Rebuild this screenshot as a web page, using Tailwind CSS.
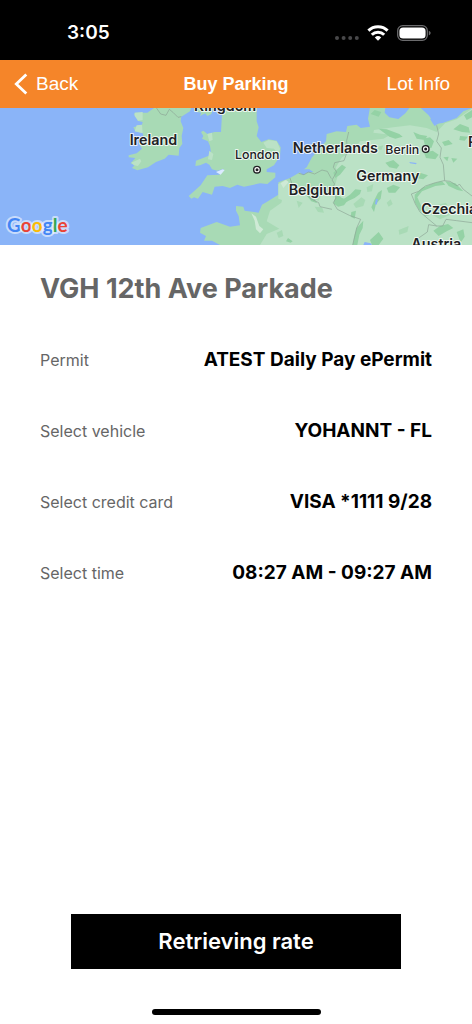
<!DOCTYPE html>
<html lang="en">
<head>
    <meta charset="UTF-8">
    <meta name="viewport" content="width=device-width, initial-scale=1.0">
    <title>Buy Parking</title>
    <script src="https://cdn.jsdelivr.net/npm/@tailwindcss/browser@4"></script>
</head>
<body class="min-h-screen flex flex-col bg-white text-black font-['Inter',sans-serif]">
    <!-- Status bar -->
    <div class="h-[60px] shrink-0 bg-black text-white flex justify-between items-center pl-[67px] pr-[41px] pt-[6px]">
        <span class="text-[19px] leading-6 font-semibold">3:05</span>
        <div class="flex items-center gap-2">
            <svg class="w-6 h-4" viewBox="0 0 24 16" fill="#48484a">
                <circle cx="2" cy="13" r="2"/>
                <circle cx="8.6" cy="13" r="2"/>
                <circle cx="15.2" cy="13" r="2"/>
                <circle cx="21.8" cy="13" r="2"/>
            </svg>
            <svg class="w-[22px] h-4" viewBox="0 0 22 16" fill="none" stroke="white" stroke-width="3">
                <path d="M1.4 5.6a13.8 13.8 0 0 1 19.2 0"/>
                <path d="M4.8 9.7a8.8 8.8 0 0 1 12.4 0"/>
                <path d="M11 15.8 7.8 12.5a4.7 4.7 0 0 1 6.4 0z" fill="white" stroke="none"/>
            </svg>
            <svg class="w-[34px] h-4" viewBox="0 0 34 16">
                <rect x=".7" y=".7" width="29.6" height="14.6" rx="5" fill="none" stroke="#6b6b6d" stroke-width="1.3"/>
                <rect x="2.4" y="2.4" width="26.2" height="11.2" rx="3.6" fill="white"/>
                <path d="M31.8 5.7v4.6c1.1-.4 1.8-1.3 1.8-2.3s-.7-1.9-1.8-2.3z" fill="#6b6b6d"/>
            </svg>
        </div>
    </div>

    <!-- Nav bar -->
    <header class="h-12 shrink-0 bg-[#f58529] text-white grid grid-cols-3 items-center px-[14px] font-['Liberation_Sans',Arial,sans-serif] text-[19px]">
        <button type="button" class="flex items-center gap-2 justify-self-start">
            <svg class="w-[14px] h-[22px]" viewBox="0 0 14 22" fill="none" stroke="white" stroke-width="2.8">
                <path d="M12.3 1.5 2.3 11l10 9.5"/>
            </svg>
            Back
        </button>
        <h1 class="text-[18px] font-bold justify-self-center whitespace-nowrap">Buy Parking</h1>
        <a href="#" class="justify-self-end pr-2">Lot Info</a>
    </header>

    <!-- Map -->
    <svg class="w-full h-[137px] shrink-0 bg-[#8ab4f8]" viewBox="-360 12 1416 411" preserveAspectRatio="xMinYMid slice" role="img" aria-label="Map">
        <!-- Land -->
        <g fill="#a8dab5">
            <path d="M105 10 82 26 45 26 42 32 58 42 52 50 68 54 66 62 40 70 46 82 68 86 70 96 58 120 66 134 50 148 26 154 26 160 46 162 32 178 44 184 36 192 52 199 84 190 108 174 134 164 146 152 176 155 178 132 187 120 185 96 190 72 182 52 184 38 210 22 214 10Z"/>
            <path d="M303 10 306 30 303 84 284 84 262 90 250 80 243 84 250 96 246 104 264 112 270 126 274 152 228 170 226 186 240 184 258 176 268 182 276 196 292 200 312 194 298 212 262 214 242 244 206 276 214 284 222 280 234 284 248 264 276 272 284 248 308 246 330 252 352 242 372 248 420 238 442 240 466 220 466 206 440 204 440 196 462 184 480 156 482 130 470 110 446 106 424 114 410 96 416 70 410 52 410 10Z"/>
            <path d="M222 10 230 24 244 26 240 36 256 28 262 36 274 30 280 10Z"/>
            <path d="M475 235 510 222 540 205 560 190 576 160 600 132 618 112 620 90 650 82 678 84 682 66 710 62 722 72 750 68 744 44 750 10 796 10 794 26 808 40 835 45 856 28 870 10 900 10 926 34 944 60 968 57 1010 42 1030 22 1056 12V423H300L276 410 252 410 258 396 240 386 242 372 290 354 330 368 360 364 356 336 348 320 348 306 370 308 374 320 416 326 426 302 440 294 475 272Z"/>
        </g>
        <g fill="#bbe2c6">
            <path d="M475 240 495 228 512 240 530 262 570 280 596 290 604 270 640 262 652 220 648 190 666 160 700 140 720 112 790 104 812 92 760 86 762 78 820 70 870 64 920 72 950 84 975 58 1010 46 1056 14V423H420L440 390 478 374 440 352 450 320 484 296 486 288 475 284Z"/>
            <path d="M44 26 68 24 68 48 54 50 44 36ZM50 64 66 62 68 88 44 82ZM34 176 60 164 64 172 54 186 42 184Z"/>
            <path d="M430 116 446 108 470 112 480 134 476 152 462 134 440 132ZM262 90 276 86 278 108 268 112ZM268 140 280 150 276 168 264 166Z"/>
        </g>
        <g fill="#cfead6">
            <path d="M482 238 498 228 506 234 490 252ZM394 328 408 338 418 366 430 376 420 388 408 376 404 350Z"/>
        </g>

        <!-- Forests and hills -->
        <g fill="#94d2a5">
            <path d="M776 74 800 76 838 90 848 98 826 104 808 98ZM752 30 764 18 784 24 776 38ZM880 84 900 92 922 96 914 108 890 104ZM910 104 930 100 942 112 934 132 916 128ZM912 146 938 140 956 152 946 166 918 162ZM966 114 986 108 998 120 974 126ZM970 160 986 158 982 172ZM994 162 1012 164 1000 176ZM1000 76 1020 60 1046 70 1050 86 1026 84ZM1020 96 1044 98 1034 110 1018 108ZM1032 34 1056 18V40L1040 48Z"/>
            <path d="M796 176 820 168 838 184 830 194 808 190ZM880 212 900 206 924 214 910 226 888 222ZM640 206 666 182 678 190 660 212 646 222ZM690 272 706 256 724 258 720 270 704 282 686 290 670 300 660 292ZM650 270 666 282 684 288 672 304 654 308 640 298ZM762 290 774 266 786 258 782 284 768 300 762 324 754 310ZM800 252 820 242 840 250 826 266 806 266ZM556 270 584 286 592 298 574 292ZM710 372 730 350 728 372 718 392 712 423H698L704 392ZM694 324 708 320 704 344 692 338ZM750 408 776 384 790 404 776 423H756Z"/>
            <path d="M884 272 906 252 940 238 966 232 976 242 946 246 906 262 892 280 902 302 928 334 914 336 896 316 884 294ZM976 232 1006 238 1030 262 1012 258 986 246ZM940 380 960 366 984 360 1000 372 980 382 956 396ZM1010 384 1030 376 1034 398 1022 416ZM498 412 504 402 518 412 512 416Z"/>
        </g>
        <g fill="#a8dab5">
            <path d="M700 300 724 280 736 288 730 306 708 312ZM800 296 812 286 818 300 806 308ZM836 378 866 366 862 384 838 392ZM740 250 760 240 756 262 742 264ZM940 306 978 296 996 330 960 346 930 328ZM760 132 790 124 784 138ZM530 290 548 296 536 312ZM584 308 606 310 612 326 594 324ZM470 386 486 378 490 396 476 402Z"/>
        </g>

        <!-- Lakes and inlets -->
        <path fill="#8ab4f8" d="M544 196 568 196 580 204 560 206 550 214 540 206ZM868 174 890 177 888 181 870 178ZM768 284 774 286 770 302 765 300ZM734 414 752 418 756 423H730ZM808 22 818 14 828 30 820 36ZM930 44 944 46 956 58 944 66 938 58Z"/>
        <path fill="#dcebff" d="M288 204 308 196 314 198 302 212Z"/>

        <!-- Borders -->
        <g fill="none" stroke="#8ca596" stroke-width="2" stroke-linejoin="round">
            <path d="M108 10 122 30 138 34 148 16 160 26 174 40 184 38"/>
            <path d="M686 84 680 110 682 142 672 170 644 176 640 190 650 204 636 228 644 240 636 252 648 282 640 296 652 316 688 334 722 346 710 372 698 423"/>
            <path d="M536 208 552 212 566 204 584 210 606 198 622 202 634 224M510 222 516 240 540 258 560 264 572 284 596 296 600 308 636 316"/>
            <path d="M950 64 956 90 950 112 964 132 960 160 970 182 974 230M874 270 896 262 916 246 946 236 972 230 990 232 1012 246 1018 240 1030 256 1056 276M874 270 886 300 900 324 926 346 950 366 968 366 978 346 1010 350 1056 356M950 366 926 362 922 384 896 402 890 423"/>
        </g>

        <!-- Labels -->
        <g class="font-['Inter',sans-serif]" font-size="43" font-weight="600" fill="#202124" stroke="white" stroke-opacity=".8" stroke-width="6" stroke-linejoin="round" paint-order="stroke">
            <text x="29" y="123">Ireland</text>
            <text x="222" y="22">Kingdom</text>
            <text x="518" y="147">Netherlands</text>
            <text x="709" y="231">Germany</text>
            <text x="506" y="273">Belgium</text>
            <text x="904" y="331">Czechia</text>
            <text x="874" y="435">Austria</text>
            <text x="1044" y="128">Poland</text>
            <g font-size="37" font-weight="500">
                <text x="345" y="165">London</text>
                <text x="796" y="149">Berlin</text>
            </g>
        </g>
        <g fill="white" stroke="#202124" stroke-width="4">
            <circle cx="411" cy="197" r="10"/>
            <circle cx="917" cy="135" r="10"/>
        </g>
        <g fill="#202124">
            <circle cx="411" cy="197" r="4.5"/>
            <circle cx="917" cy="135" r="4.5"/>
        </g>
        <text x="-339" y="383" class="font-['Lato',sans-serif]" font-size="57" font-weight="700" stroke="white" stroke-opacity=".55" stroke-width="12" stroke-linejoin="round" paint-order="stroke"><tspan fill="#4285f4">G</tspan><tspan fill="#ea4335">o</tspan><tspan fill="#fbbc04">o</tspan><tspan fill="#4285f4">g</tspan><tspan fill="#34a853">l</tspan><tspan fill="#ea4335">e</tspan></text>
    </svg>

    <!-- Purchase details -->
    <main class="flex-1 flex flex-col px-10 pt-6">
        <h2 class="text-[27px] leading-10 font-bold text-[#666666]">VGH 12th Ave Parkade</h2>
        <div class="mt-4 text-[16px] leading-6">
            <div class="h-[71px] pt-[23px] flex items-baseline justify-between">
                <label for="permit" class="text-[#666666]">Permit</label>
                <button type="button" id="permit" class="text-[19px] font-bold">ATEST Daily Pay ePermit</button>
            </div>
            <div class="h-[71px] pt-[23px] flex items-baseline justify-between">
                <label for="vehicle" class="text-[#666666]">Select vehicle</label>
                <button type="button" id="vehicle" class="text-[19px] font-bold">YOHANNT - FL</button>
            </div>
            <div class="h-[71px] pt-[23px] flex items-baseline justify-between">
                <label for="card" class="text-[#666666]">Select credit card</label>
                <button type="button" id="card" class="text-[19px] font-bold">VISA *1111 9/28</button>
            </div>
            <div class="h-[71px] pt-[23px] flex items-baseline justify-between">
                <label for="time" class="text-[#666666]">Select time</label>
                <button type="button" id="time" class="text-[19px] font-bold">08:27 AM - 09:27 AM</button>
            </div>
        </div>
    </main>

    <!-- Footer -->
    <footer class="flex flex-col items-center px-[71px] pb-[9px]">
        <button type="button" class="w-full h-[55px] bg-black text-white text-[22px] font-semibold">Retrieving rate</button>
        <div class="mt-10 w-[169px] h-[6px] rounded-full bg-black"></div>
    </footer>
</body>
</html>
